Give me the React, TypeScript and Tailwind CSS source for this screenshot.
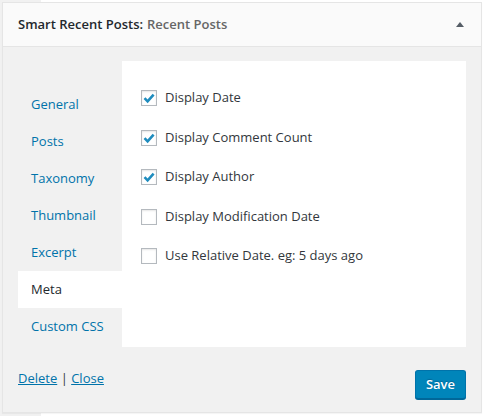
import React, { useState } from "react";

const tabs = ["General", "Posts", "Taxonomy", "Thumbnail", "Excerpt", "Meta", "Custom CSS"];

const options = [
  { label: "Display Date", checked: true },
  { label: "Display Comment Count", checked: true },
  { label: "Display Author", checked: true },
  { label: "Display Modification Date", checked: false },
  { label: "Use Relative Date. eg: 5 days ago", checked: false },
];

const Check = ({ checked, onClick }: { checked: boolean; onClick: () => void }) => (
  <span
    onClick={onClick}
    className="w-4 h-4 border border-[#b4b9be] bg-white shadow-[inset_0_1px_2px_rgba(0,0,0,0.1)] flex items-center justify-center shrink-0 cursor-pointer"
  >
    {checked && (
      <svg width="14" height="14" viewBox="0 0 14 14">
        <path d="M2.5 7.2 L5.6 10.3 L11.6 3.6" stroke="#1e8cbe" strokeWidth="2.6" fill="none" strokeLinecap="butt" strokeLinejoin="miter" />
      </svg>
    )}
  </span>
);

const App = () => {
  const [active, setActive] = useState("Meta");
  const [checks, setChecks] = useState(options.map((o) => o.checked));

  return (
    <div className="w-[484px] h-[416px] pt-[2px] px-[2px] bg-[linear-gradient(to_right,#f1f1f1_41px,#ffffff_41px)] font-['Open_Sans',sans-serif] text-[13px] text-[#23282d]">
      <div className="w-[480px] border border-[#e5e5e5] bg-[#f1f1f1] shadow-[0_1px_1px_rgba(0,0,0,0.04)]">
        <div className="h-[44px] bg-[#fafafa] border-b border-[#e5e5e5] flex items-center justify-between pl-[15px] pr-[17px]">
          <h3 className="text-[13px] font-semibold text-[#23282d] leading-none">
            Smart Recent Posts:<span className="text-[#666] ml-1">Recent Posts</span>
          </h3>
          <span className="w-0 h-0 border-l-[4px] border-r-[4px] border-b-[5px] border-l-transparent border-r-transparent border-b-[#555d66]" />
        </div>

        <div className="px-[15px] pt-[14px]">
          <div className="flex h-[286px]">
            <ul className="w-[104px] pt-[25px] shrink-0">
              {tabs.map((t) => (
                <li
                  key={t}
                  onClick={() => setActive(t)}
                  className={
                    t === active
                      ? "h-[37px] flex items-center pl-[13px] bg-white text-[#23282d] cursor-pointer"
                      : "h-[37px] flex items-center pl-[13px] text-[#0073aa] cursor-pointer"
                  }
                >
                  {t}
                </li>
              ))}
            </ul>
            <div className="flex-1 bg-white pl-[19px] pt-[29px]">
              {options.map((o, i) => (
                <label key={o.label} className="flex items-center h-4 mb-[23.5px] gap-2 cursor-pointer">
                  <Check
                    checked={checks[i]}
                    onClick={() => setChecks(checks.map((c, j) => (j === i ? !c : c)))}
                  />
                  <span className="text-[#32373c]">{o.label}</span>
                </label>
              ))}
            </div>
          </div>

          <div className="flex justify-between items-start pt-[23px] pb-[13px]">
            <div className="-mt-[1px] text-[#0073aa]">
              <a href="#" className="underline">Delete</a>
              <span className="text-[#32373c]"> | </span>
              <a href="#" className="underline">Close</a>
            </div>
            <button className="h-[29px] px-[10px] rounded-[3px] bg-[#0085ba] border border-[#0073aa] border-b-[#006799] shadow-[0_1px_0_#006799] text-white font-semibold [text-shadow:0_-1px_1px_#006799]">
              Save
            </button>
          </div>
        </div>
      </div>
    </div>
  );
};

export default App;
